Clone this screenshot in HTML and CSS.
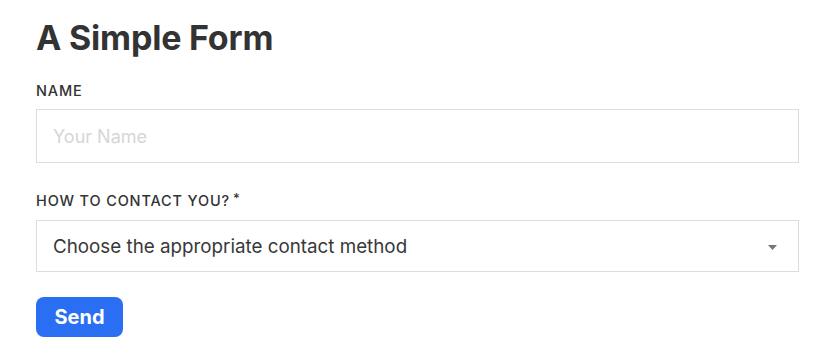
FILE: index.html
```html
<!DOCTYPE html>
<html lang="en">
<head>
<meta charset="utf-8">
<title>A Simple Form</title>
<link rel="stylesheet" href="styles.css">
</head>
<body>
<form class="form">
  <h1 class="title">A Simple Form</h1>
  <div class="field">
    <label class="label" for="name">Name</label>
    <input class="input" id="name" type="text" placeholder="Your Name">
  </div>
  <div class="field">
    <label class="label" for="contact">How to contact you?<span class="req">*</span></label>
    <div class="select">
      <span class="select-text">Choose the appropriate contact method</span>
      <svg class="caret" width="9" height="5" viewBox="0 0 9 5"><path d="M0 0h9L4.5 5z" fill="#777"/></svg>
    </div>
  </div>
  <button class="btn" type="button">Send</button>
</form>
</body>
</html>
```
FILE: styles.css
```css
* { box-sizing: border-box; }
html, body { margin: 0; padding: 0; background: #fff; }
body {
  font-family: Inter, "Noto Sans", sans-serif;
  color: #333;
}
.form {
  padding: 16px 34px 0 36px;
  display: flex;
  flex-direction: column;
}
.title {
  margin: 0 0 22px;
  font-size: 34px;
  font-weight: 700;
  line-height: 44px;
  letter-spacing: -0.2px;
  color: #333;
}
.field {
  display: flex;
  flex-direction: column;
  margin-bottom: 29px;
}
.label {
  font-size: 14.5px;
  font-weight: 500;
  letter-spacing: 0.85px;
  text-transform: uppercase;
  line-height: 17px;
  margin-bottom: 10px;
  color: #333;
}
.req { margin-left: 3px; position: relative; top: -3px; font-size: 13px; }
.input {
  height: 54px;
  border: 1px solid #ddd;
  border-radius: 0;
  padding: 0 16px;
  font-family: inherit;
  font-size: 18px;
  color: #333;
  outline: none;
}
.input::placeholder { color: #d6d6d6; }
.select {
  height: 52px;
  border: 1px solid #ddd;
  padding: 0 21px 0 16px;
  display: flex;
  align-items: center;
  justify-content: space-between;
  font-size: 18.8px;
  color: #383838;
}
.caret { margin-top: 3px; }
.btn {
  align-self: flex-start;
  width: 87px;
  height: 40px;
  border: 0;
  border-radius: 8px;
  background: #2a6ff3;
  color: #fff;
  font-family: Inter, sans-serif;
  font-size: 20px;
  font-weight: 700;
  padding: 0;
  margin-top: -4px;
}
```
